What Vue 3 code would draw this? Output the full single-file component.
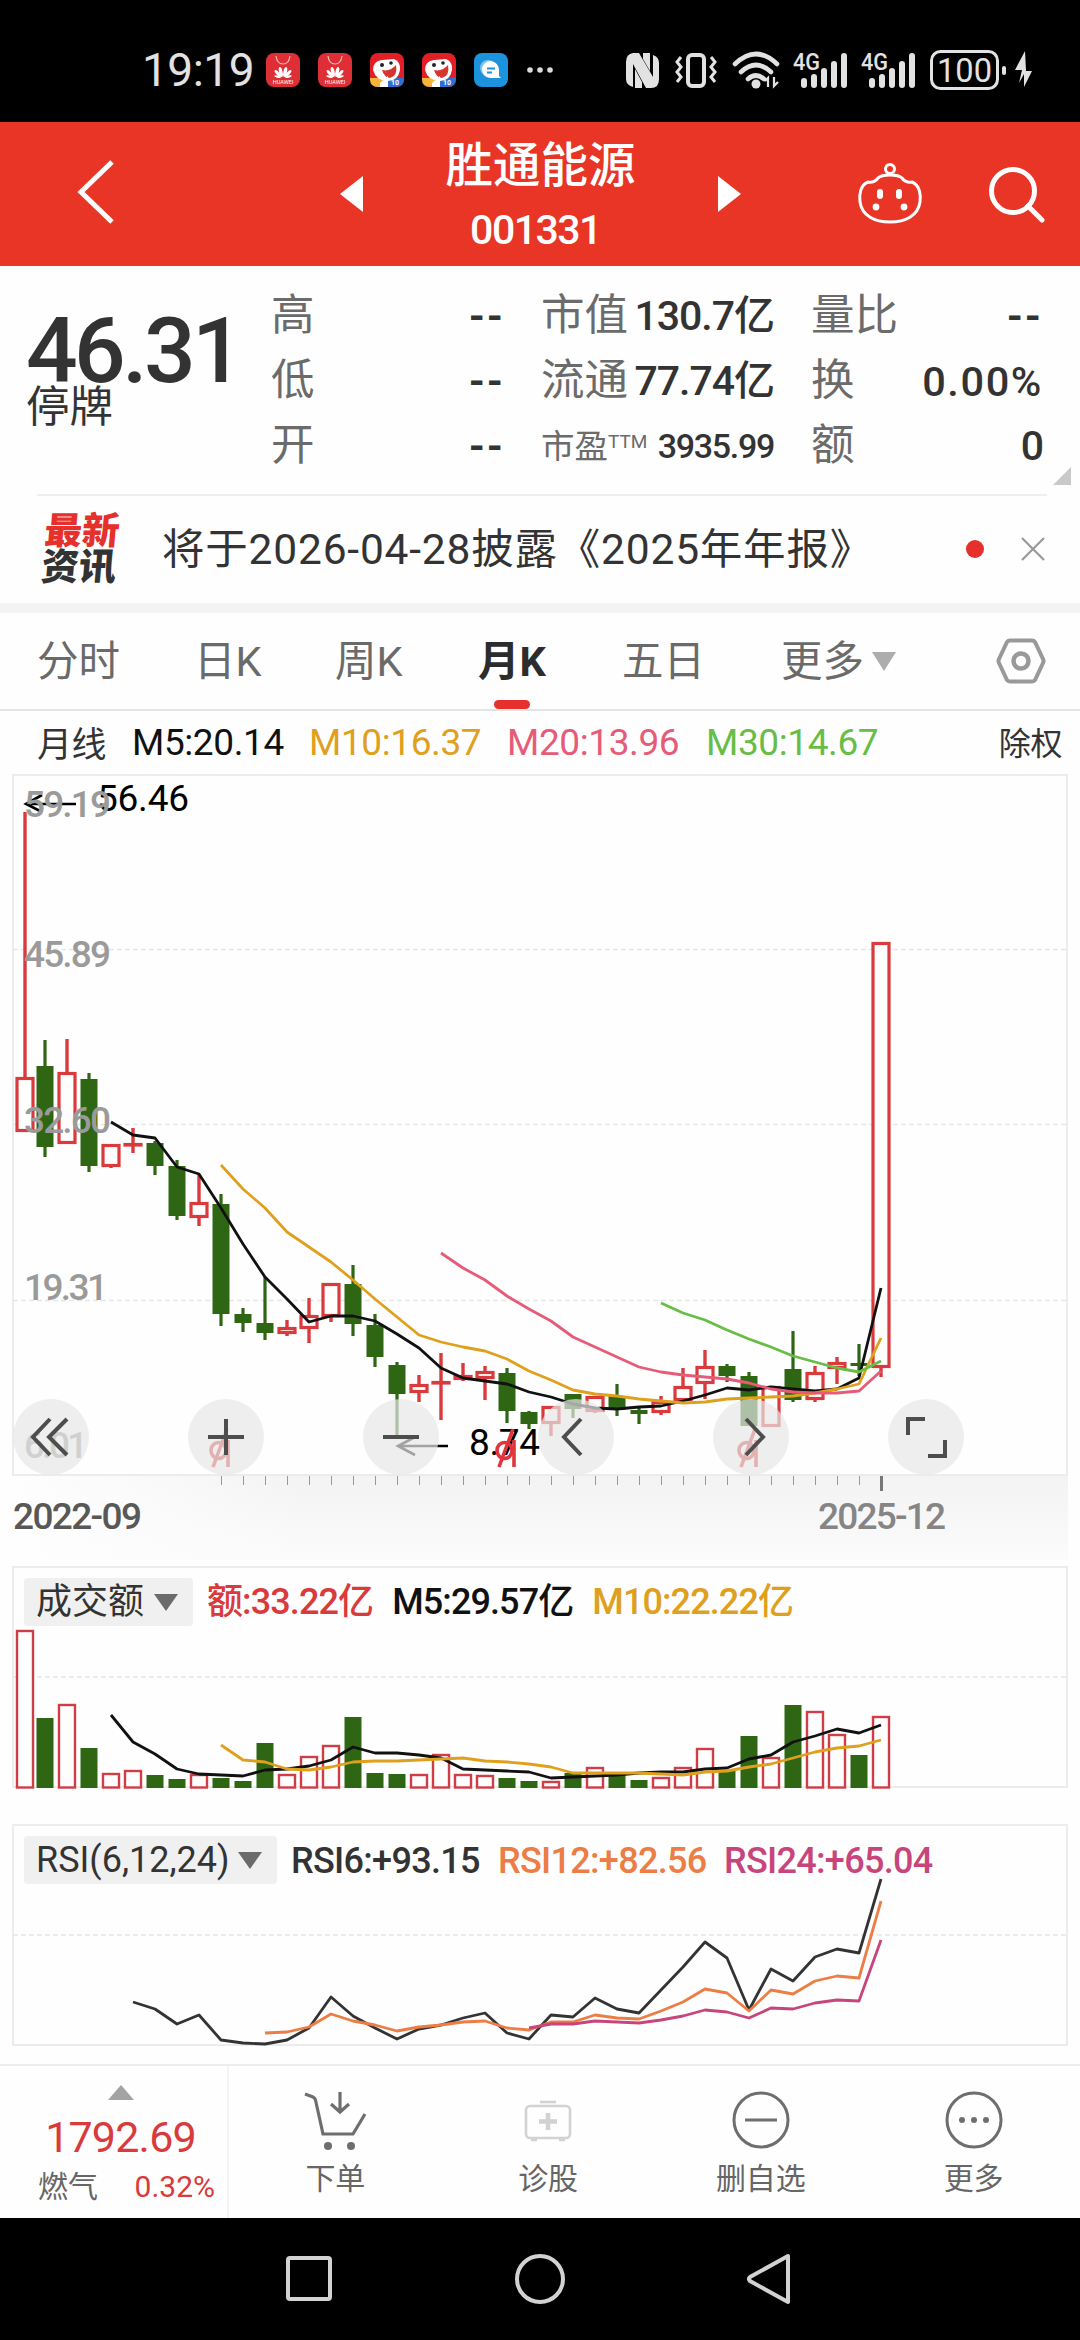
<template>
  <div class="app">
    <div class="status-bar">
      <span class="time">19:19</span>
      <div class="notices">
        <svg v-for="n in 2" :key="'h' + n" width="34" height="34" viewBox="0 0 34 34">
          <rect width="34" height="34" rx="8" fill="#dd2f35" />
          <path d="M10 3 Q11 11 17 11 Q23 11 24 3" fill="none" stroke="#f7b9b5" stroke-width="1.2" />
          <g fill="#fff">
            <ellipse cx="14.8" cy="19" rx="1.8" ry="5" transform="rotate(-12 14.8 19)" />
            <ellipse cx="19.2" cy="19" rx="1.8" ry="5" transform="rotate(12 19.2 19)" />
            <ellipse cx="11.8" cy="20.5" rx="1.6" ry="4.4" transform="rotate(-42 11.8 20.5)" />
            <ellipse cx="22.2" cy="20.5" rx="1.6" ry="4.4" transform="rotate(42 22.2 20.5)" />
            <ellipse cx="11.5" cy="23.6" rx="1.1" ry="3.4" transform="rotate(-75 11.5 23.6)" />
            <ellipse cx="22.5" cy="23.6" rx="1.1" ry="3.4" transform="rotate(75 22.5 23.6)" />
          </g>
          <text x="17" y="31" text-anchor="middle" font-size="5.5" fill="#fff">HUAWEI</text>
        </svg>
        <svg v-for="n in 2" :key="'j' + n" width="34" height="34" viewBox="0 0 34 34">
          <rect width="34" height="34" rx="8" fill="#e21f26" />
          <path d="M0 25 H17 V34 H8 Q0 34 0 26 Z" fill="#f3b53c" />
          <path d="M17 25 H34 V26 Q34 34 26 34 H17 Z" fill="#2f6fd0" />
          <path d="M3 17 Q3 8 12 7 L24 6 Q31 9 30 17 Q28 28 18 28 Q6 28 3 17 Z" fill="#fff" />
          <path d="M12 17 Q20 19 26 12 Q28 23 20 25 Q14 24 12 17 Z" fill="#d7332f" />
          <circle cx="12" cy="12" r="2" fill="#222" />
          <circle cx="21" cy="10" r="1.8" fill="#222" />
          <path d="M10 30 L18 23 V34 H10 Z" fill="#fff" />
          <text x="25" y="32" text-anchor="middle" font-size="7" font-weight="bold" fill="#fff">10</text>
        </svg>
        <svg width="34" height="34" viewBox="0 0 34 34">
          <rect width="34" height="34" rx="8" fill="#1c93dc" />
          <circle cx="14" cy="15" r="8" fill="#79c4f0" />
          <path d="M17 8 A9 9 0 0 1 25 17 V23 L27 25 H16 A8.500 8.500 0 0 1 17 8 Z" fill="#fff" />
          <path d="M13 15.500 H21 M13 19.500 H18" stroke="#1c93dc" stroke-width="1.8" />
        </svg>
        <svg class="dots" width="28" height="34" viewBox="0 0 28 34" fill="#dcdcdc">
          <circle cx="4" cy="17" r="2.8" /><circle cx="14" cy="17" r="2.8" /><circle cx="24" cy="17" r="2.8" />
        </svg>
      </div>
      <svg class="signals" width="412" height="46" viewBox="624 46 412 46" fill="#e2e2e2">
        <!-- nfc -->
        <path d="M633 52 H639 L653 76 V54 Q659 56 659 62 V78 Q659 87 651 87 L646 87 L633 63 V86 Q626 84 626 78 V61 Q626 53 633 52 Z" />
        <path d="M643 52 H650 V70 L643 58 Z M635 68 L642 81 V87 H635 Z" />
        <!-- vibrate -->
        <rect x="688" y="54" width="16" height="31" rx="4" fill="none" stroke="#e2e2e2" stroke-width="4" />
        <path d="M681 56 L677 61 L681 66 L677 71 L681 76 L677 81 M711 56 L715 61 L711 66 L715 71 L711 76 L715 81" fill="none" stroke="#e2e2e2" stroke-width="3" />
        <!-- wifi -->
        <g fill="none" stroke="#e2e2e2" stroke-width="4.6" stroke-linecap="round">
          <path d="M735 63 Q756 43 777 63" />
          <path d="M741 71 Q756 57 771 71" />
          <path d="M748 78 Q756 71 764 78" />
        </g>
        <circle cx="756" cy="83" r="4.5" />
        <path d="M768 86 V77 L765 80 M774 76 V85 L778 81" stroke="#e2e2e2" stroke-width="2.2" fill="none" />
        <!-- mobile signal -->
        <g v-for="x in [0, 68]" :key="x" :transform="`translate(${x} 0)`">
          <text x="793" y="69" font-size="24" font-weight="500" textLength="27" lengthAdjust="spacingAndGlyphs">4G</text>
          <rect x="801" y="77" width="6" height="10" rx="3" />
          <rect x="811" y="73" width="6" height="14" rx="3" />
          <rect x="821" y="67" width="6" height="20" rx="3" />
          <rect x="831" y="60" width="6" height="27" rx="3" />
          <rect x="841" y="52" width="6" height="35" rx="3" />
        </g>
        <!-- battery -->
        <rect x="931.5" y="50.5" width="66" height="37" rx="9" fill="none" stroke="#e2e2e2" stroke-width="3" />
        <text x="937" y="81" font-size="34" textLength="55" lengthAdjust="spacingAndGlyphs">100</text>
        <rect x="1002" y="65" width="4" height="9" rx="2" />
        <path d="M1025 50 L1015 69 H1022 L1019 82 L1024 73 V86 L1032 70 H1026 Z" />
      </svg>
    </div>

    <header class="header">
      <svg class="back" width="40" height="66" viewBox="0 0 40 66"><path d="M37 3 L6 33 L37 63" fill="none" stroke="#fff" stroke-width="5" /></svg>
      <svg class="prev" width="24" height="38" viewBox="0 0 24 38"><path d="M23 1 V37 L0 19 Z" fill="#fff" /></svg>
      <div class="title">
        <div class="name">胜通能源</div>
        <div class="code">001331</div>
      </div>
      <svg class="next" width="24" height="38" viewBox="0 0 24 38"><path d="M1 1 V37 L24 19 Z" fill="#fff" /></svg>
      <svg class="robot" width="66" height="62" viewBox="857 164 66 62">
        <g fill="none" stroke="#fff" stroke-width="3">
          <circle cx="890" cy="170" r="4.5" />
          <path d="M868 183 C873 184 877 181 878 179 C882 175 898 175 902 179 C903 181 907 184 912 183 C920 186 921 197 920 203 C918 217 905 223 890 223 C875 223 862 217 860 203 C859 197 860 186 868 183 Z" />
        </g>
        <rect x="877" y="190" width="6" height="10" rx="3" fill="#fff" />
        <rect x="896" y="190" width="6" height="10" rx="3" fill="#fff" />
        <circle cx="876" cy="208" r="3.4" fill="#fff" /><circle cx="904" cy="208" r="3.4" fill="#fff" />
      </svg>
      <svg class="search" width="58" height="58" viewBox="988 164 58 58" fill="none" stroke="#fff" stroke-width="5">
        <circle cx="1013" cy="190" r="21.5" /><path d="M1028 205 L1042 219" stroke-linecap="round" />
      </svg>
    </header>

    <section class="quote">
      <div class="price-box">
        <div class="price">46.31</div>
        <div class="state">停牌</div>
      </div>
      <div class="col col-a">
        <div v-for="l in ['高', '低', '开']" :key="l" class="cell"><label>{{ l }}</label><b class="dash">--</b></div>
      </div>
      <div class="col col-b">
        <div class="cell"><label>市值</label><b>130.7亿</b></div>
        <div class="cell"><label>流通</label><b>77.74亿</b></div>
        <div class="cell small"><label>市盈<sup>TTM</sup></label><b>3935.99</b></div>
      </div>
      <div class="col col-c">
        <div class="cell"><label>量比</label><b class="dash">--</b></div>
        <div class="cell"><label>换</label><b class="pct">0.00%</b></div>
        <div class="cell"><label>额</label><b>0</b></div>
      </div>
      <i class="corner"></i>
    </section>

    <section class="news">
      <div class="news-logo"><div class="hot">最新</div><div>资讯</div></div>
      <span class="news-text">将于2026-04-28披露《2025年年报》</span>
      <i class="red-dot"></i>
      <svg width="24" height="24" viewBox="0 0 24 24"><path d="M1 1 L23 23 M23 1 L1 23" stroke="#999" stroke-width="2.2" /></svg>
    </section>

    <nav class="tabs">
      <span v-for="t in tabs" :key="t.name" :class="['tab', { active: t.name === current }]" :style="{ width: t.w + 'px' }" @click="current = t.name">{{ t.name }}</span>
      <i class="tri light"></i>
      <svg class="setting" width="50" height="48" viewBox="0 0 50 48" fill="none" stroke="#999">
        <path d="M14 3.5 H36 Q38 3.5 39 5 L47 22 Q48 24 47 26 L39 43 Q38 44.500 36 44.500 H14 Q12 44.500 11 43 L3 26 Q2 24 3 22 L11 5 Q12 3.500 14 3.500 Z" stroke-width="4" />
        <circle cx="25" cy="24" r="7.500" stroke-width="4.500" />
      </svg>
    </nav>

    <div class="ma-row">
      <span class="ma-name">月线</span>
      <span class="m5">M5:20.14</span>
      <span class="m10">M10:16.37</span>
      <span class="m20">M20:13.96</span>
      <span class="m30">M30:14.67</span>
      <span class="adj">除权</span>
    </div>

    <div class="chart main-chart">
      <svg width="1080" height="790" viewBox="0 770 1080 790">
        <defs>
          <linearGradient id="fade" x1="0" y1="0" x2="0" y2="1">
            <stop offset="0" stop-color="#f3f3f3" /><stop offset="1" stop-color="#fbfbfb" />
          </linearGradient>
          <linearGradient id="side" x1="0" y1="0" x2="1" y2="0">
            <stop offset="0" stop-color="#fefefe" /><stop offset="1" stop-color="#fefefe" stop-opacity="0" />
          </linearGradient>
        </defs>
        <rect x="12" y="1476" width="1056" height="84" fill="url(#fade)" />
        <rect x="12" y="1476" width="300" height="84" fill="url(#side)" />
        <rect x="13" y="775" width="1054" height="700" fill="#fefefe" stroke="#ececec" stroke-width="2" />
        <path d="M13 949.500 H1067 M13 1124.500 H1067 M13 1300.500 H1067" class="grid" />
        <path :d="ticks" stroke="#999" stroke-width="1" />
        <path d="M881.500 1476 V1491" stroke="#777" stroke-width="3" />
        <g v-for="(c, i) in candles" :key="i">
          <template v-if="c[4]">
            <path :d="`M${cx(i)} ${c[0]} V${c[1]} M${cx(i)} ${c[2]} V${c[3]}`" stroke="#d93a3c" stroke-width="3.400" />
            <rect :x="cx(i) - 8" :y="c[1] + 1.5" width="16" :height="Math.max(c[2] - c[1] - 3, 0.5)" fill="#fefefe" stroke="#d93a3c" stroke-width="3.200" />
          </template>
          <template v-else>
            <path :d="`M${cx(i)} ${c[0]} V${c[3]}`" stroke="#2e6614" stroke-width="3.200" />
            <rect :x="cx(i) - 8.5" :y="c[1]" width="17" :height="c[2] - c[1]" fill="#2e6614" />
          </template>
        </g>
        <polyline :points="line(ma5, 4)" stroke="#111" />
        <polyline :points="line(ma10, 9)" stroke="#dfa01e" />
        <polyline :points="line(ma20, 19)" stroke="#e65c78" />
        <polyline :points="line(ma30, 29)" stroke="#67bd45" />
        <path d="M76 804 H26 M42 795 L26 804 L42 812" fill="none" stroke="#000" stroke-width="2.600" />
        <path d="M448 1446 H398 M415 1437 L398 1446 L415 1455" fill="none" stroke="#000" stroke-width="2.600" />
        <text x="97" y="811" class="peak" textLength="92">56.46</text>
        <text x="469" y="1455" class="peak" textLength="71">8.74</text>
        <g class="scale">
          <text v-for="s in scales" :key="s.t" x="24" :y="s.y" :textLength="s.w">{{ s.t }}</text>
        </g>
        <!-- ex-dividend marks -->
        <g v-for="x in [221, 507, 749]" :key="x" :transform="`translate(${x} 1448)`" fill="none" stroke="#e0353b" stroke-width="3.600">
          <ellipse cx="-2.500" cy="2.500" rx="7.500" ry="8" />
          <path d="M-8 19 L6 -19 M7 -8 V19" />
        </g>
        <text x="13" y="1529" class="date" fill="#585858" textLength="129">2022-09</text>
        <text x="818" y="1529" class="date" fill="#858585" textLength="128">2025-12</text>
      </svg>
      <div class="tools">
        <button v-for="d in tools" :key="d">
          <svg width="76" height="76" viewBox="-38 -38 76 76"><path :d="d" fill="none" stroke="#4d4d4d" stroke-width="4" /></svg>
        </button>
      </div>
    </div>

    <div class="chart">
      <div class="legend">
        <span class="tag tag-vol">成交额<i class="tri"></i></span>
        <span class="vol">额:33.22亿</span>
        <span class="vol m5">M5:29.57亿</span>
        <span class="vol m10">M10:22.22亿</span>
      </div>
      <svg width="1080" height="250" viewBox="0 1560 1080 250">
        <rect x="13" y="1567" width="1054" height="220" fill="#fefefe" stroke="#ececec" stroke-width="2" />
        <path d="M13 1677 H1067" class="grid" />
        <g v-for="(c, i) in candles" :key="i">
          <rect v-if="c[4]" :x="cx(i) - 8" :y="volume[i] + 1" width="16" :height="1787.5 - volume[i] - 1" fill="#fefefe" stroke="#cf3d46" stroke-width="2.400" />
          <rect v-else :x="cx(i) - 8.5" :y="volume[i]" width="17" :height="1788 - volume[i]" fill="#2e6614" />
        </g>
        <polyline :points="line(vol5, 4)" stroke="#111" />
        <polyline :points="line(vol10, 9)" stroke="#dfa01e" />
      </svg>
    </div>

    <div class="chart">
      <div class="legend rsi">
        <span class="tag tag-rsi">RSI(6,12,24)<i class="tri"></i></span>
        <span class="r6">RSI6:+93.15</span>
        <span class="r12">RSI12:+82.56</span>
        <span class="r24">RSI24:+65.04</span>
      </div>
      <svg width="1080" height="254" viewBox="0 1810 1080 254">
        <rect x="13" y="1825" width="1054" height="220" fill="#fefefe" stroke="#ececec" stroke-width="2" />
        <path d="M13 1935 H1067" class="grid" />
        <polyline :points="line(rsi6, 5)" stroke="#333" />
        <polyline :points="line(rsi12, 11)" stroke="#ec7d45" />
        <polyline :points="line(rsi24, 23)" stroke="#c8457c" />
      </svg>
    </div>

    <footer class="footer">
      <div class="index">
        <i class="up"></i>
        <div class="index-value">1792.69</div>
        <div class="index-row"><span>燃气</span><span class="red">0.32%</span></div>
      </div>
      <div class="action">
        <svg width="66" height="64" viewBox="301 2088 66 64" fill="none" stroke="#6e6e6e" stroke-width="3.200">
          <path d="M304 2094 L312 2097 Q314 2098 314.500 2100 L322 2134 H352 L364 2114" />
          <path d="M339 2092 V2111 M330 2104 L339 2112 L348 2104" />
          <circle cx="327" cy="2146" r="4" fill="#6e6e6e" stroke="none" /><circle cx="350" cy="2146" r="4" fill="#6e6e6e" stroke="none" />
        </svg>
        <span>下单</span>
      </div>
      <div class="action">
        <svg width="66" height="64" viewBox="514 2088 66 64" fill="none" stroke="#d2d2d2" stroke-width="2.600">
          <path d="M539 2102 H555" />
          <rect x="525" y="2106" width="44" height="32" rx="4" />
          <path d="M530 2140 H536 M558 2140 H564" />
          <path d="M547 2113 V2130 M538 2121.500 H556" stroke-width="4.500" />
        </svg>
        <span>诊股</span>
      </div>
      <div class="action">
        <svg width="66" height="64" viewBox="-33 -32 66 64" fill="none" stroke="#6e6e6e" stroke-width="3">
          <circle r="27" /><path d="M-16 0 H16" />
        </svg>
        <span>删自选</span>
      </div>
      <div class="action">
        <svg width="66" height="64" viewBox="-33 -32 66 64" fill="#6e6e6e">
          <circle r="27" fill="none" stroke="#6e6e6e" stroke-width="3" />
          <circle cx="-12" r="3" /><circle r="3" /><circle cx="12" r="3" />
        </svg>
        <span>更多</span>
      </div>
    </footer>

    <div class="navbar">
      <svg width="1080" height="122" viewBox="0 2218 1080 122" fill="none" stroke="#d2d2d2" stroke-width="4">
        <rect x="288" y="2258" width="42" height="41" rx="2" />
        <circle cx="540" cy="2279" r="23" />
        <path d="M788 2256 V2302 L750 2281 Q748 2279 750 2277 Z" stroke-linejoin="round" />
      </svg>
    </div>
  </div>
</template>

<script setup>
import { ref } from 'vue'

const current = ref('月K')
const tabs = [
  { name: '分时', w: 157 },
  { name: '日K', w: 141 },
  { name: '周K', w: 143 },
  { name: '月K', w: 144 },
  { name: '五日', w: 159 },
  { name: '更多', w: 91 }
]
const scales = [
  { t: '59.19', y: 817, w: 87 },
  { t: '45.89', y: 967, w: 87 },
  { t: '32.60', y: 1133, w: 87 },
  { t: '19.31', y: 1300, w: 84 },
  { t: '6.01', y: 1458, w: 64 }
]
const tools = [
  'M-1 -18 L-18 0 L-1 18 M16 -18 L-2 0 L16 18',
  'M0 -18 V18 M-18 0 H18',
  'M-18 0 H18',
  'M5 -18 L-12 0 L5 18',
  'M-5 -18 L12 0 L-5 18',
  'M-18 -2 V-18 H-1 M19 3 V19 H2'
]

// 每根K线: 最高, 实体上沿, 实体下沿, 最低, 是否收阳
const candles = [
  [812, 1077, 1132, 1132, 1], [1040, 1066, 1147, 1157, 0], [1039, 1072, 1144, 1144, 1], [1073, 1079, 1166, 1172, 0],
  [1144, 1144, 1167, 1168, 1], [1128, 1143, 1146, 1153, 1], [1141, 1143, 1166, 1175, 0], [1160, 1166, 1216, 1220, 0],
  [1175, 1202, 1218, 1226, 1], [1194, 1204, 1314, 1326, 0], [1308, 1314, 1323, 1332, 0], [1277, 1323, 1333, 1340, 0],
  [1320, 1327, 1334, 1336, 1], [1298, 1315, 1329, 1343, 1], [1283, 1283, 1317, 1322, 1], [1265, 1284, 1324, 1336, 0],
  [1314, 1325, 1357, 1367, 0], [1362, 1365, 1394, 1437, 0], [1375, 1384, 1393, 1402, 1], [1353, 1381, 1384, 1420, 1],
  [1363, 1375, 1380, 1381, 1], [1366, 1371, 1379, 1400, 1], [1368, 1373, 1411, 1423, 0], [1411, 1412, 1424, 1429, 0],
  [1406, 1406, 1424, 1436, 1], [1394, 1394, 1409, 1418, 0], [1396, 1396, 1412, 1413, 1], [1384, 1396, 1410, 1416, 0],
  [1407, 1410, 1414, 1424, 0], [1396, 1401, 1413, 1415, 1], [1368, 1386, 1401, 1401, 1], [1350, 1366, 1384, 1399, 1],
  [1364, 1366, 1376, 1382, 0], [1372, 1376, 1426, 1426, 0], [1386, 1386, 1427, 1427, 1], [1331, 1369, 1400, 1402, 0],
  [1366, 1372, 1400, 1402, 1], [1357, 1362, 1369, 1384, 1], [1344, 1363, 1366, 1376, 0], [942, 942, 1368, 1377, 1]
]
const ma5 = [1122, 1135, 1138, 1167, 1174, 1208, 1244, 1277, 1299, 1322, 1316, 1316, 1321, 1334, 1348, 1368, 1378, 1381, 1384, 1392, 1397, 1404, 1408, 1409, 1407, 1406, 1401, 1395, 1388, 1390, 1387, 1389, 1391, 1389, 1378, 1288]
const ma10 = [1165, 1189, 1208, 1232, 1247, 1262, 1280, 1299, 1317, 1335, 1342, 1347, 1351, 1359, 1371, 1380, 1390, 1394, 1396, 1399, 1401, 1403, 1402, 1399, 1398, 1397, 1396, 1393, 1389, 1384, 1338]
const ma20 = [1253, 1268, 1280, 1296, 1309, 1321, 1337, 1347, 1357, 1367, 1372, 1375, 1377, 1379, 1383, 1389, 1392, 1393, 1393, 1391, 1371]
const ma30 = [1303, 1313, 1320, 1330, 1339, 1347, 1356, 1362, 1368, 1372, 1361]
const volume = [1630, 1718, 1704, 1748, 1773, 1770, 1775, 1779, 1774, 1778, 1781, 1743, 1774, 1756, 1745, 1717, 1773, 1774, 1774, 1754, 1774, 1775, 1778, 1781, 1781, 1773, 1767, 1775, 1780, 1777, 1767, 1748, 1771, 1736, 1757, 1705, 1711, 1734, 1755, 1716]
const vol5 = [1715, 1742, 1754, 1769, 1774, 1775, 1776, 1770, 1769, 1766, 1760, 1747, 1753, 1753, 1755, 1758, 1769, 1770, 1771, 1772, 1778, 1777, 1776, 1775, 1773, 1772, 1772, 1769, 1768, 1759, 1755, 1742, 1736, 1729, 1733, 1725]
const vol10 = [1745, 1760, 1762, 1769, 1770, 1767, 1762, 1761, 1761, 1760, 1759, 1758, 1761, 1762, 1764, 1767, 1773, 1773, 1773, 1773, 1774, 1775, 1772, 1771, 1767, 1764, 1758, 1752, 1748, 1746, 1740]
const rsi6 = [2002, 2009, 2024, 2015, 2040, 2043, 2044, 2040, 2028, 1997, 2016, 2028, 2039, 2029, 2025, 2018, 2013, 2033, 2039, 2015, 2017, 1998, 2009, 2013, 1990, 1967, 1942, 1958, 2010, 1969, 1981, 1957, 1949, 1953, 1879]
const rsi12 = [2033, 2032, 2027, 2014, 2021, 2025, 2031, 2027, 2025, 2022, 2021, 2028, 2030, 2022, 2022, 2015, 2018, 2019, 2011, 2002, 1989, 1993, 2011, 1990, 1994, 1981, 1976, 1978, 1901]
const rsi24 = [2028, 2024, 2024, 2021, 2022, 2023, 2020, 2016, 2010, 2012, 2018, 2008, 2009, 2003, 2000, 2001, 1940]

const cx = (i) => (i === 0 ? 25 : 23 + i * 22)
const line = (arr, start) => arr.map((y, i) => `${cx(i + start)},${y}`).join(' ')
const ticks = Array.from({ length: 30 }, (_, i) => `M${cx(i + 9) + 0.5} 1476 V1485`).join(' ')
</script>

<style>
body {
  background: #000;
}
</style>

<style scoped>
.app {
  width: 1080px;
  height: 2340px;
  display: flex;
  flex-direction: column;
  background: #fefefe;
  color: #333;
  overflow: hidden;
  font-family: Roboto, "Noto Sans CJK SC", sans-serif;
}
.app > * {
  flex-shrink: 0;
  box-sizing: border-box;
}
svg {
  display: block;
  flex-shrink: 0;
}
i {
  flex-shrink: 0;
}
.status-bar {
  height: 122px;
  padding: 18px 44px 0 142px;
  background: #000;
  color: #e2e2e2;
  display: flex;
  align-items: center;
}
.time {
  width: 124px;
  font-size: 46px;
  letter-spacing: -0.5px;
}
.notices {
  flex: 1;
  display: flex;
  gap: 18px;
}
.header {
  height: 144px;
  background: #e83525;
  color: #fff;
  display: flex;
  align-items: center;
  padding-left: 75px;
}
.back {
  margin-top: -4px;
}
.prev {
  margin-left: 225px;
}
.title {
  width: 353px;
  text-align: center;
}
.name {
  font-size: 47.5px;
  line-height: 60px;
  font-weight: 500;
  margin-top: 8px;
}
.code {
  font-size: 41px;
  line-height: 60px;
  letter-spacing: -1.5px;
  font-weight: 500;
  margin-left: -10px;
  margin-top: 4px;
}
.robot {
  margin-left: 116px;
}
.search {
  margin-left: 65px;
}
.quote {
  position: relative;
  height: 228px;
  display: flex;
  padding: 18px 37px 0 26px;
}
.price-box {
  width: 245px;
  padding-top: 22px;
}
.price {
  font-size: 91px;
  line-height: 90px;
  font-weight: 500;
  letter-spacing: -3.6px;
}
.state {
  font-size: 43.5px;
  line-height: 48px;
  margin-top: -12px;
}
.col {
  display: flex;
  flex-direction: column;
}
.col-a {
  width: 234px;
}
.col-b {
  width: 233px;
  margin-left: 36px;
}
.col-c {
  width: 232px;
  margin-left: 37px;
}
.cell {
  height: 65px;
  line-height: 65px;
  display: flex;
  align-items: center;
  justify-content: space-between;
  font-size: 43.5px;
  white-space: nowrap;
}
.cell label {
  color: #6b6b6b;
  margin-top: -3px;
}
.cell b {
  font-weight: 500;
  font-size: 41px;
  letter-spacing: -1px;
  margin-top: -1px;
}
.cell .dash {
  font-weight: 700;
  letter-spacing: 2px;
  margin-top: 0;
}
.cell .pct {
  font-size: 41.5px;
  letter-spacing: 1.6px;
}
.small {
  font-size: 33.5px;
}
.small label {
  margin-top: 0;
}
.small b {
  font-size: 34px;
  letter-spacing: -1.3px;
  margin-top: 0;
}
.small sup {
  font-size: 19px;
  line-height: 0;
  vertical-align: 10px;
}
.corner {
  position: absolute;
  right: 9px;
  bottom: 9px;
  border-left: 18px solid transparent;
  border-bottom: 18px solid #c9c9c9;
}
.news {
  height: 119px;
  margin: 0;
  padding: 0 35px 0 43px;
  display: flex;
  align-items: center;
  border-bottom: 10px solid #f3f3f3;
  background: linear-gradient(#efefef, #efefef) 37px 0 / 1010px 2px no-repeat;
}
.news-logo {
  width: 119px;
  font-size: 37.5px;
  line-height: 36px;
  font-weight: 900;
  transform: skewX(-5deg);
}
.hot {
  color: #e5302c;
}
.news-text {
  flex: 1;
  font-size: 42.5px;
  letter-spacing: 0.8px;
  margin-top: -6px;
}
.red-dot {
  width: 18px;
  height: 18px;
  border-radius: 50%;
  background: #e5302c;
  margin-right: 37px;
}
.tabs {
  height: 98px;
  padding-left: 37px;
  display: flex;
  align-items: center;
  border-bottom: 2px solid #e4e4e4;
}
.tab {
  position: relative;
  font-size: 41.5px;
  line-height: 94px;
  padding-top: 2px;
  color: #6a6a6a;
}
.active {
  color: #2c2c2c;
  font-weight: 700;
}
.active::after {
  content: "";
  position: absolute;
  left: 16px;
  bottom: 0;
  width: 36px;
  height: 9px;
  border-radius: 5px;
  background: #e5302c;
}
.tri {
  border: 12px solid transparent;
  border-top: 17px solid #6b6b6b;
  border-bottom: 0;
}
.tri.light {
  border-top: 19px solid #adadad;
}
.setting {
  margin-left: 100px;
}
.ma-row {
  height: 59px;
  padding: 4px 18px 0 37px;
  display: flex;
  align-items: center;
  font-size: 37px;
  letter-spacing: -0.4px;
}
.ma-name {
  width: 95px;
  font-size: 35px;
  margin-top: -2px;
}
.ma-row .m5 {
  width: 177px;
}
.ma-row .m10 {
  width: 198px;
}
.m20 {
  width: 199px;
  color: #e65c78;
}
.m30 {
  flex: 1;
  color: #67bd45;
}
.m5 {
  color: #111;
}
.m10 {
  color: #dfa01e;
}
.adj {
  font-size: 32px;
  margin-top: -3px;
}
.chart {
  position: relative;
}
.grid {
  stroke: #e6e6e6;
  stroke-width: 1.5;
  stroke-dasharray: 5 3;
}
polyline {
  fill: none;
  stroke-width: 2.8;
  stroke-linejoin: round;
}
.peak {
  font-size: 37px;
}
.scale {
  font-size: 37px;
  font-weight: 500;
  fill: #9a9a9a;
}
.date {
  font-size: 37px;
  font-weight: 500;
}
.tools {
  position: absolute;
  left: 13px;
  top: 629px;
  display: flex;
  gap: 99px;
}
.tools button {
  width: 76px;
  height: 76px;
  padding: 0;
  border: none;
  border-radius: 50%;
  background: rgba(230, 231, 230, 0.7);
}
.legend {
  position: absolute;
  left: 24px;
  top: 18px;
  height: 48px;
  display: flex;
  align-items: center;
  font-size: 36px;
  line-height: 42px;
  white-space: nowrap;
  font-weight: 500;
}
.legend.rsi {
  top: 26px;
}
.tag {
  height: 48px;
  box-sizing: border-box;
  padding: 0 15px 0 12px;
  background: #f0f0f0;
  border-radius: 4px;
  display: flex;
  align-items: center;
  justify-content: space-between;
  font-weight: 400;
}
.tag-vol {
  width: 169px;
  margin-right: 14px;
}
.tag-rsi {
  width: 253px;
  margin-right: 14px;
}
.vol {
  letter-spacing: -0.9px;
  margin-right: 19px;
  color: #d93a3c;
}
.vol.m5 {
  color: #111;
}
.vol.m10 {
  color: #dfa01e;
}
.r6,
.r12,
.r24 {
  letter-spacing: -0.7px;
  margin-top: 2px;
}
.r6 {
  width: 207px;
}
.r12 {
  width: 226px;
  color: #ec7d45;
}
.r24 {
  color: #c8457c;
}
.footer {
  height: 154px;
  border-top: 2px solid #ececec;
  display: flex;
}
.index {
  width: 229px;
  box-sizing: border-box;
  border-right: 2px solid #f4f4f4;
  display: flex;
  flex-direction: column;
  align-items: center;
  padding: 19px 0 0 14px;
}
.up {
  border: 13px solid transparent;
  border-bottom: 15px solid #a3a3a3;
  border-top: 0;
}
.index-value {
  font-size: 43px;
  line-height: 50px;
  margin-top: 12px;
  letter-spacing: -0.8px;
  color: #d93a3c;
}
.index-row {
  width: 177px;
  margin: 2px 0 0 12px;
  display: flex;
  justify-content: space-between;
  font-size: 30px;
  line-height: 46px;
  color: #666;
}
.red {
  color: #d93a3c;
}
.action {
  flex: 1;
  display: flex;
  flex-direction: column;
  align-items: center;
  padding-top: 22px;
  font-size: 30px;
  line-height: 54px;
  color: #666;
}
.navbar {
  height: 122px;
  background: #000;
}
</style>
